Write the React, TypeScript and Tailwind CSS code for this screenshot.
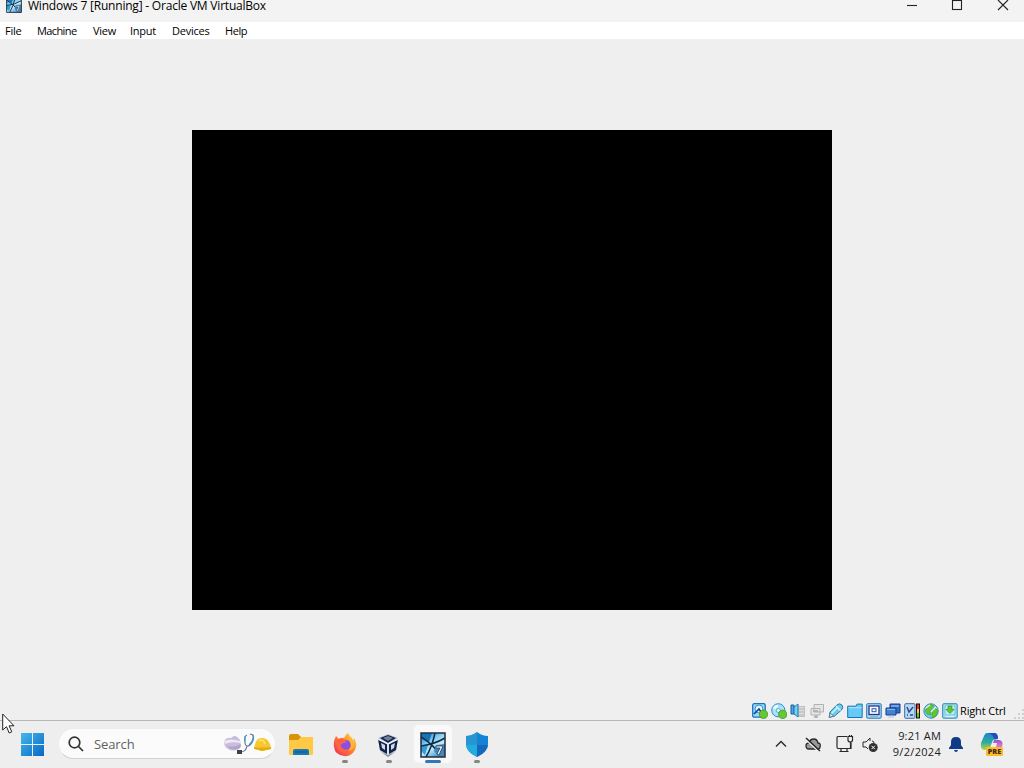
import type { ReactNode } from "react";

const menus = [
  { label: "File", box: "w-8" },
  { label: "Machine", box: "w-14 tracking-[-0.6px]" },
  { label: "View", box: "w-[37px]" },
  { label: "Input", box: "w-[42px]" },
  { label: "Devices", box: "w-[53px]" },
  { label: "Help", box: "w-10 tracking-[-0.45px]" },
];

function StatusIcon({ children }: { children: ReactNode }) {
  return (
    <svg className="h-4 w-4 shrink-0" viewBox="0 0 16 16" fill="none">
      {children}
    </svg>
  );
}

// Device indicators, left to right
function StatusIcons() {
  return (
    <div className="flex gap-[3px]">
      <StatusIcon>
        <rect x="0.7" y="0.7" width="12.5" height="13.5" rx="1.5" fill="#9bd8fa" stroke="#1874bd" strokeWidth="1.3" />
        <circle cx="7" cy="6" r="4" fill="#e2f5fe" stroke="#3193d2" />
        <path d="M2 11L7 6L9 9" stroke="#173f91" strokeWidth="1.6" />
        <circle cx="11.5" cy="11.3" r="4.2" fill="#6ac82e" stroke="#299025" strokeWidth=".7" />
      </StatusIcon>
      <StatusIcon>
        <circle cx="7.3" cy="7.3" r="6.6" fill="#a6e3fa" stroke="#2791cf" />
        <path d="M3 6Q4 3 7 3" stroke="#f1fcff" strokeWidth="2.5" />
        <circle cx="7.3" cy="7.5" r="2" fill="#e8f8f9" stroke="#61acc2" />
        <circle cx="11.7" cy="11.4" r="4.2" fill="#6ac82e" stroke="#299025" strokeWidth=".7" />
      </StatusIcon>
      <StatusIcon>
        <rect x="8.5" y="3.5" width="6" height="10" fill="#ddd" stroke="#c0c0c0" />
        <path d="M9 6H14M9 9H14M9 12H14" stroke="#b2b2b2" />
        <path d="M1 2H4V11H1Z" fill="#4ca9da" stroke="#1d5e96" />
        <path d="M4 4L8 1V14L4 11Z" fill="#75cef3" stroke="#2379b5" />
      </StatusIcon>
      <StatusIcon>
        <path d="M5 1.5H14.5V9H5ZM2 5.5H11V12H2Z" fill="#e6e6e6" stroke="#b1b1b1" />
        <path d="M4 8H9M5 14H9M7 12V14" stroke="#aaa" strokeWidth="1.4" />
      </StatusIcon>
      <StatusIcon>
        <path d="M1.2 14.4L2 9L9 1.8Q12-.2 14 2.1Q15.8 4.6 13.5 7L6.5 13.1Z" fill="#70cbed" stroke="#287aaa" />
        <path d="M8 3L12.5 7.5M3 11L10 4" stroke="#c9f4ff" strokeWidth="1.5" />
        <path d="M1.2 14.4L2.2 10L5.7 13Z" fill="#dfeef3" stroke="#547d94" />
      </StatusIcon>
      <StatusIcon>
        <path d="M.7 3.2H9L10 1.1H15.2V14.5H.7Z" fill="#68c9f4" stroke="#1377b9" />
        <path d="M1.5 4.7H14.5" stroke="#b2eaff" />
      </StatusIcon>
      <StatusIcon>
        <rect x=".7" y=".7" width="14.5" height="14.5" rx="1" fill="#a9dcf7" stroke="#2575b2" />
        <rect x="3" y="3" width="10" height="8.5" fill="#fff" stroke="#26348c" strokeWidth="1.3" />
        <rect x="6" y="5.7" width="4" height="3" fill="#eef7ff" stroke="#3059ab" />
        <path d="M4 13.3H12" stroke="#83b4d8" />
      </StatusIcon>
      <StatusIcon>
        <path d="M5 1H15V10H5Z" fill="#306dbe" stroke="#173d92" />
        <path d="M6 3H14" stroke="#bedcff" />
        <path d="M1 5H11V12H1Z" fill="#4583d0" stroke="#153e91" />
        <path d="M2 6.5H10" stroke="#82b8f3" />
        <path d="M3 14H9M6.5 12V14" stroke="#b5c5d9" />
      </StatusIcon>
      <StatusIcon>
        <rect x=".7" y=".7" width="10.3" height="14.6" rx="1" fill="#b6d9f3" stroke="#3c69a1" />
        <path d="M3 4L5 9L9 4M3 12H4M6 12H9" stroke="#26458e" strokeWidth="1.4" />
        <rect x="12" y=".5" width="4" height="15" fill="#111" />
        <path d="M14 1.5V6" stroke="#f42e2b" strokeWidth="2" />
        <path d="M14 6V10" stroke="#ffcc2d" strokeWidth="2" />
        <path d="M14 10V14.5" stroke="#65bd28" strokeWidth="2" />
      </StatusIcon>
      <StatusIcon>
        <circle cx="8" cy="8" r="7.2" fill="#72cdf3" stroke="#3b91b8" />
        <path d="M2 8L7 1L11 3L7 8L8 12L4 11ZM9 9L12 5L15 8L13 13L9 15Z" fill="#65c52c" stroke="#4a9a31" strokeWidth=".6" />
        <path d="M3 5L7 2M8 9L13 4" stroke="#e0f5e9" strokeWidth="1.2" />
      </StatusIcon>
      <StatusIcon>
        <rect x=".7" y=".7" width="14.5" height="14.5" rx="1" fill="#99dcf7" stroke="#3387b7" />
        <rect x="3" y="2" width="10" height="10" rx="2" fill="#b5edf2" stroke="#69b9aa" strokeWidth=".7" />
        <path d="M6 3H10V6.5H12L8 10.5L4 6.5H6Z" fill="#62c431" stroke="#258a29" strokeWidth=".6" />
        <path d="M4 13.4H12" stroke="#e7fbff" />
      </StatusIcon>
    </div>
  );
}

function Windows7Icon({ className }: { className: string }) {
  return (
    <svg className={className} viewBox="0 0 26 26">
      <defs>
        <linearGradient id="vm-tile" x1="0.2" y1="0" x2="0.8" y2="1">
          <stop stopColor="#218bd0" />
          <stop offset="0.35" stopColor="#8acff2" />
          <stop offset="0.6" stopColor="#c2e9fa" />
          <stop offset="1" stopColor="#298bc9" />
        </linearGradient>
      </defs>
      <path fill="url(#vm-tile)" d="M1 1H25V25H1Z" />
      <path d="M1 1H12L9 10L1 4Z" fill="#1674b9" />
      <path d="M1 14L8 13L5 23L1 19Z" fill="#319ddb" />
      <path d="M1 5Q13 12 22 25M15 1Q12 15 6 25M1 14Q15 12 25 6" stroke="#102c43" strokeWidth="1.5" fill="none" />
      <path d="M16 13L25 12V25H19L14 19Z" fill="#4b83b5" />
      <path d="M16 14H23L19 23L17 22L20 16H16Z" fill="#f3f9ff" stroke="#173f67" strokeWidth=".8" />
      <path d="M1 1H25V25H1Z" stroke="#202f3c" strokeWidth="1.5" fill="none" />
    </svg>
  );
}

function TaskButton({ running = true, active = false, children }: { running?: boolean; active?: boolean; children: ReactNode }) {
  return (
    <div className="flex w-11 justify-center">
      <div className={active ? "flex h-[38px] w-[38px] flex-col items-center rounded-[5px] bg-[#f9f9f9]" : "flex h-[38px] w-[38px] flex-col items-center"}>
        <div className="flex h-[35px] items-center pt-1">{children}</div>
        {running && <span className={active ? "h-[3px] w-4 shrink-0 rounded bg-[#3576b6]" : "h-[3px] w-1.5 shrink-0 rounded bg-[#858585]"} />}
      </div>
    </div>
  );
}

function SearchDecoration() {
  return (
    <svg className="h-[22px] w-[49px]" viewBox="0 0 49 22" fill="none">
      <path d="M0 9Q2 4 7 5Q11 0 16 7L17 14Q11 20 4 16Q0 14 0 9" fill="#c9bddd" />
      <path d="M0 8Q6 5 16 8V10Q7 8 1 11Z" fill="#eee8f4" />
      <path d="M3 13Q11 15 17 11L16 15Q9 19 3 13" fill="#b1a5c7" />
      <path d="M23 2Q20 3 21 10Q22 15 26 12Q31 7 29 2L26 1M23 13Q22 19 16 19" stroke="#66788d" strokeWidth="1.2" />
      <path d="M21 3V8M29 2Q30 7 25 12" stroke="#3b9bd0" strokeWidth="1.1" />
      <path d="M13 17H18V21H13Z" fill="#3e4245" />
      <path d="M31 12Q32 4 39 5Q46 6 47 16L38 18L30 15Z" fill="#f6c82f" />
      <path d="M30 14Q38 15 47 14V16L38 18L30 16Z" fill="#e3ad13" />
      <path d="M35 8Q39 5 41 11" stroke="#ffe56a" strokeWidth="1.6" />
    </svg>
  );
}

function TaskApps() {
  return (
    <div className="flex">
      <TaskButton running={false}>
        <svg className="h-6 w-[26px]" viewBox="0 0 26 24">
          <path d="M1 3Q1 1 3 1H10L13 4H23Q25 4 25 7V21H1Z" fill="#d6940c" />
          <path d="M1 7H10L13 4H25V21Q25 22 23 22H2Q1 22 1 20Z" fill="#ffc943" />
          <path d="M5 22V18Q5 16 7 16H19Q21 16 21 18V22Z" fill="#1778bc" />
          <path d="M7 19H19" stroke="#1b5e91" strokeWidth="1.5" />
        </svg>
      </TaskButton>
      <TaskButton>
        <svg className="h-6 w-6" viewBox="0 0 24 24">
          <defs>
            <linearGradient id="fox" x1="1" y1="0" x2="0" y2="1">
              <stop stopColor="#ffe545" /><stop offset=".45" stopColor="#ff872f" /><stop offset="1" stopColor="#ee205f" />
            </linearGradient>
          </defs>
          <path d="M3 3L6 6Q8 4 11 5Q12 2 15 0Q16 3 19 5L20 8L21 5Q25 11 22 17Q18 24 11 23Q2 22 1 14Q0 8 3 3Z" fill="url(#fox)" />
          <circle cx="12.5" cy="12" r="5.2" fill="#8950e8" />
          <path d="M3 8Q7 4 11 6L14 9L10 10Q6 12 9 15Q12 18 17 15Q14 22 8 19Q3 16 3 8Z" fill="#ff633f" />
          <path d="M15 1Q18 7 18 12Q18 16 15 18Q22 17 21 9Q19 6 15 1" fill="#ffb936" />
        </svg>
      </TaskButton>
      <TaskButton>
        <svg className="mr-0.5 h-6 w-[22px]" viewBox="0 0 22 24">
          <path d="M1 5L11 1L21 5L19 18L11 24L3 18Z" fill="#b7c5d3" />
          <path d="M3 5L11 2L19 5L11 10ZM1 6L10 11V21L3 17ZM12 11L21 6L19 17L12 21Z" fill="#13224a" />
          <path d="M6 5L11 3L16 5L11 8Z" fill="#6e8297" />
          <path d="M4 10L8 12V17L5 15ZM14 12L18 10L17 15L14 17Z" fill="#d0dbe5" />
          <path d="M1 6L11 11L21 6M11 11V22" stroke="#e9eff4" strokeWidth="1.5" fill="none" />
          <path d="M4 19L11 22L18 19L11 24Z" fill="#8997a6" />
        </svg>
      </TaskButton>
      <TaskButton active><Windows7Icon className="h-[26px] w-[26px]" /></TaskButton>
      <TaskButton>
        <svg className="h-[25px] w-6" viewBox="0 0 24 25">
          <path d="M12 0Q17 4 23 4V12Q23 20 12 25Q1 20 1 12V4Q7 4 12 0Z" fill="#1283d5" />
          <path d="M12 0V13H1V4Q7 4 12 0Z" fill="#2795d2" />
          <path d="M12 13H23Q22 20 12 25Z" fill="#1767bb" />
          <path d="M12 13V25Q2 20 1 13Z" fill="#20acdf" />
        </svg>
      </TaskButton>
    </div>
  );
}

function SystemTray() {
  return (
    <div className="ml-auto flex h-[46px] items-center text-[#292929]">
      <svg className="h-3 w-3" viewBox="0 0 12 12" fill="none" stroke="currentColor" strokeWidth="1.4">
        <path d="M1 8.5L6 3.5L11 8.5" />
      </svg>
      <svg className="ml-[18px] h-4 w-4" viewBox="0 0 16 16" fill="none" stroke="currentColor">
        <path d="M4 13Q1 13 1 10Q1 7 4 7Q5 3 9 3Q12 3 13 7Q16 7 15 11Q15 13 12 13Z" fill="#999" strokeWidth="1.3" />
        <path d="M0 3L12 14" stroke="#eee" strokeWidth="1.3" />
        <path d="M1 2L15 15" strokeWidth="1.5" />
      </svg>
      <svg className="ml-[15px] h-[18px] w-[18px]" viewBox="0 0 18 18" fill="none" stroke="currentColor" strokeWidth="1.2">
        <path d="M11 1.5H2Q1 1.5 1 3V12Q1 13.5 2 13.5H15V8M5 13V16.5M11 13V16.5M3.5 16.5H12.5" />
        <path d="M12 1.5H16.5V5Q16.5 7 14.5 7Q12 7 12 5ZM14.5 7V13M13.5 0V2M15.5 0V2" />
      </svg>
      <svg className="ml-2 h-[17px] w-[17px]" viewBox="0 0 17 17" fill="none" stroke="currentColor">
        <path d="M1 6H4L8 2V5M1 6V11H4L6 13M10 5Q12 5 12 7" />
        <circle cx="11.2" cy="11.5" r="4.5" fill="#303030" stroke="none" />
        <path d="M9.5 9.8L12.9 13.2M12.9 9.8L9.5 13.2" stroke="#fff" />
      </svg>
      <div className="ml-[7px] w-[55px] text-right font-['Open_Sans','Noto_Sans',sans-serif] text-[11px] leading-[16px] tracking-[0.2px] whitespace-nowrap text-[#202020]">
        <div>9:21 AM</div>
        <div className="tracking-[0.3px]">9/2/2024</div>
      </div>
      <svg className="ml-2 h-4 w-[14px]" viewBox="0 0 14 16">
        <path d="M2 12V6Q2 1 7 1Q12 1 12 6V9L14 12V13H0V12L2 9ZM5 14H9Q8.5 16 7 16Q5.5 16 5 14Z" fill="#103b86" />
      </svg>
      <svg className="ml-[17px] h-6 w-6" viewBox="0 0 24 24">
        <defs>
          <linearGradient id="copilot-left" x1="0" y1="0" x2="0" y2="1">
            <stop stopColor="#1686d9" /><stop offset=".55" stopColor="#31aa9d" /><stop offset="1" stopColor="#bbd83d" />
          </linearGradient>
          <linearGradient id="copilot-right" x1="0" y1="0" x2="0" y2="1">
            <stop stopColor="#8b55d6" /><stop offset=".5" stopColor="#e574c6" /><stop offset="1" stopColor="#ff8952" />
          </linearGradient>
        </defs>
        <path d="M7 1H15Q18 1 18 7L13 8L9 18H4Q0 17 1 11L4 4Q5 1 7 1Z" fill="url(#copilot-left)" />
        <path d="M14 8H19Q24 9 22 15L20 20H10L12 15H16L17 11H13Z" fill="url(#copilot-right)" />
        <path d="M8 1H15Q18 2 18 7L14 7Q13 2 8 1" fill="#254cba" />
        <rect x="6" y="15" width="17" height="9" rx="1.5" fill="#ffbb26" />
        <text x="14.5" y="22.2" textAnchor="middle" fontFamily="Open Sans, sans-serif" fontSize="7.2" fontWeight="800" fill="#3d2d17">PRE</text>
      </svg>
    </div>
  );
}

export default function App() {
  return (
    <div className="relative flex h-[768px] w-[1024px] flex-col overflow-hidden bg-[#efefef] font-['Open_Sans','Noto_Sans',sans-serif] text-black select-none">
      <header className="flex h-[22px] shrink-0 items-start bg-[#f3f3f3] pl-1.5">
        <Windows7Icon className="-mt-[3px] h-4 w-4" />
        <h1 className="ml-1.5 text-[12px] leading-3 tracking-[-0.21px] whitespace-nowrap">
          Windows 7 [Running] - Oracle VM VirtualBox
        </h1>
        <svg className="ml-auto h-3 w-[118px]" viewBox="0 0 118 12" fill="none" stroke="#222" strokeWidth="1.1">
          <path d="M1 5.5H11" />
          <rect x="46.5" y="0.5" width="9" height="9" />
          <path d="M92 0L102 10M102 0L92 10" />
        </svg>
      </header>

      <nav className="flex h-[17px] shrink-0 items-center bg-white pl-[5px] text-[11px] leading-4 tracking-[-0.25px]">
        {menus.map(item => (
          <button key={item.label} className={`${item.box} text-left whitespace-nowrap`}>{item.label}</button>
        ))}
      </nav>

      {/* Guest screen */}
      <main className="h-[663px] shrink-0 px-48 pt-[91px]">
        <div className="h-[480px] w-[640px] bg-black" />
      </main>

      <div className="flex h-[18px] shrink-0 items-center justify-end">
        <StatusIcons />
        <span className="ml-0.5 w-[47px] text-[11px] leading-4 tracking-[-0.15px] whitespace-nowrap">Right Ctrl</span>
        <svg className="ml-[7px] h-3 w-[10px] self-end" viewBox="0 0 10 12" fill="#d0d0d0">
          <path d="M8 1h2v2H8ZM4 5h2v2H4ZM8 5h2v2H8ZM0 9h2v2H0ZM4 9h2v2H4ZM8 9h2v2H8Z" />
        </svg>
      </div>

      <footer className="flex h-12 shrink-0 items-start border-t border-[#b8b8b8] bg-[#eee] pr-5">
        <svg className="mt-3 ml-[21px] h-[23px] w-[23px]" viewBox="0 0 23 23">
          <defs>
            <linearGradient id="start" x1="0" y1="0" x2="1" y2="1">
              <stop stopColor="#43b8ec" /><stop offset="1" stopColor="#0867c5" />
            </linearGradient>
          </defs>
          <path fill="url(#start)" d="M0 0H11V11H0ZM12 0H23V11H12ZM0 12H11V23H0ZM12 12H23V23H12Z" />
        </svg>
        <div className="mt-[7px] ml-3.5 flex h-[31px] w-[218px] items-center rounded-full border border-[#ececec] border-b-[#d2d2d2] bg-[#fbfbfb] pl-[9px]">
          <svg className="h-4 w-4" viewBox="0 0 16 16" fill="none" stroke="#333" strokeWidth="1.7">
            <circle cx="6.5" cy="6.5" r="5.3" /><path d="M10.5 10.5L15 15" />
          </svg>
          <span className="ml-2.5 text-[13px] leading-5 tracking-[-0.1px] text-[#616161]">Search</span>
          <div className="mr-0.5 ml-auto"><SearchDecoration /></div>
        </div>
        <div className="mt-1 ml-[3px]"><TaskApps /></div>
        <SystemTray />
      </footer>

      {/* Pointer */}
      <svg className="absolute top-[713px] left-0.5 h-[23px] w-3.5" viewBox="0 0 14 23">
        <path d="M.7 1V17L4.5 13.7L7.2 20L9.8 18.8L7.1 12.8H12Z" fill="white" stroke="#222" />
      </svg>
    </div>
  );
}
